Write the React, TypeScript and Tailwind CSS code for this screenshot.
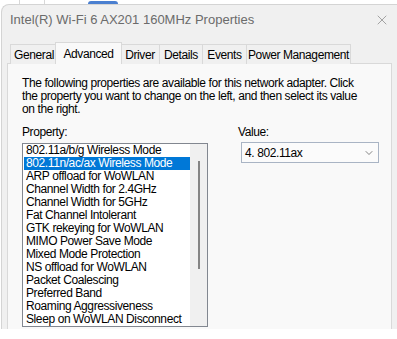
import { ChevronDown, X } from 'lucide-react';

const TABS: [string, number][] = [
  ['General', 48],
  ['Advanced', 63],
  ['Driver', 40],
  ['Details', 44],
  ['Events', 45],
  ['Power Management', 105],
];

const PROPERTIES = [
  '802.11a/b/g Wireless Mode',
  '802.11n/ac/ax Wireless Mode',
  'ARP offload for WoWLAN',
  'Channel Width for 2.4GHz',
  'Channel Width for 5GHz',
  'Fat Channel Intolerant',
  'GTK rekeying for WoWLAN',
  'MIMO Power Save Mode',
  'Mixed Mode Protection',
  'NS offload for WoWLAN',
  'Packet Coalescing',
  'Preferred Band',
  'Roaming Aggressiveness',
  'Sleep on WoWLAN Disconnect',
];

export default function App() {
  const font = { fontFamily: '"Liberation Sans", Arial, sans-serif' };

  return (
    <div className="w-[397px] h-[339px] bg-white overflow-hidden flex flex-col" style={font}>
      {/* desktop peeking above the dialog */}
      <div className="h-[4px] flex shrink-0">
        <div className="w-[20px] border-r border-[#d8d8d8]" />
        <div className="w-[25px] border-r border-[#d8d8d8]" />
        <div className="ml-[43px] w-[30px] h-[3px] bg-[#4a7fd0] rounded-t-sm mt-[1px]" />
      </div>

      <div className="ml-[1px] w-[420px] h-[325px] shrink-0 bg-[#f0f0f0] border-l border-t border-[#d4d4d4] rounded-tl-[8px] flex flex-col">
        {/* title bar */}
        <div className="h-[29px] flex items-center pl-[8px] text-[13px] text-[#6b6b6b]">
          <span className="flex-1">Intel(R) Wi-Fi 6 AX201 160MHz Properties</span>
          <X size={16} strokeWidth={1} className="text-[#7a7a7a] mr-[31px]" />
        </div>

        {/* tabs */}
        <div className="h-[8px]" />
        <div className="flex items-end pl-[8px] h-[22px] text-[12px] tracking-[-0.4px] text-black relative z-10">
          {TABS.map(([t, w]) =>
            t === 'Advanced' ? (
              <div
                key={t}
                style={{ width: w + 4 }}
                className="h-[22px] -mx-[2px] bg-[#f9f9f9] border border-b-0 border-[#d9d9d9] flex justify-center items-start pt-[2px] relative z-10"
              >
                {t}
              </div>
            ) : (
              <div
                key={t}
                style={{ width: w }}
                className="h-[20px] bg-[#f0f0f0] border border-b-0 border-[#d9d9d9] flex justify-center items-center -mr-px"
              >
                {t}
              </div>
            )
          )}
        </div>

        {/* tab page */}
        <div className="ml-[5px] w-[385px] flex-1 bg-[#f9f9f9] border border-b-0 border-[#d9d9d9] -mt-px pl-[14px] pt-[13px] text-[12px] tracking-[-0.4px] text-black">
          <p className="leading-[13px] w-[345px]">
            The following properties are available for this network adapter. Click
            the property you want to change on the left, and then select its value
            on the right.
          </p>

          <div className="flex mt-[10px]">
            <div className="w-[186px]">
              <div className="leading-[13px] mb-[4px]">Property:</div>
              <div className="h-[184px] border border-[#828790] bg-white flex">
                <div className="flex-1 pl-[1px]">
                  {PROPERTIES.map((p, i) => (
                    <div
                      key={p}
                      className={`h-[13px] leading-[13px] pl-[2px] whitespace-nowrap ${
                        i === 1 ? 'bg-[#0078d7] text-white' : ''
                      }`}
                    >
                      {p}
                    </div>
                  ))}
                </div>
                <div className="w-[17px] bg-[#f0f0f0] flex justify-center pt-[17px]">
                  <div className="w-[2px] h-[108px] bg-[#858585] ml-[1px]" />
                </div>
              </div>
            </div>

            <div className="ml-[33px]">
              <div className="leading-[13px] mb-[3px] -ml-[3px]">Value:</div>
              <div className="w-[138px] h-[21px] border border-[#a9b4c4] bg-[#fbfbfb] flex items-center pl-[3px] pr-[3px]">
                <span className="flex-1">4. 802.11ax</span>
                <ChevronDown size={12} strokeWidth={1.3} className="text-[#444]" />
              </div>
            </div>
          </div>
        </div>
      </div>
    </div>
  );
}
